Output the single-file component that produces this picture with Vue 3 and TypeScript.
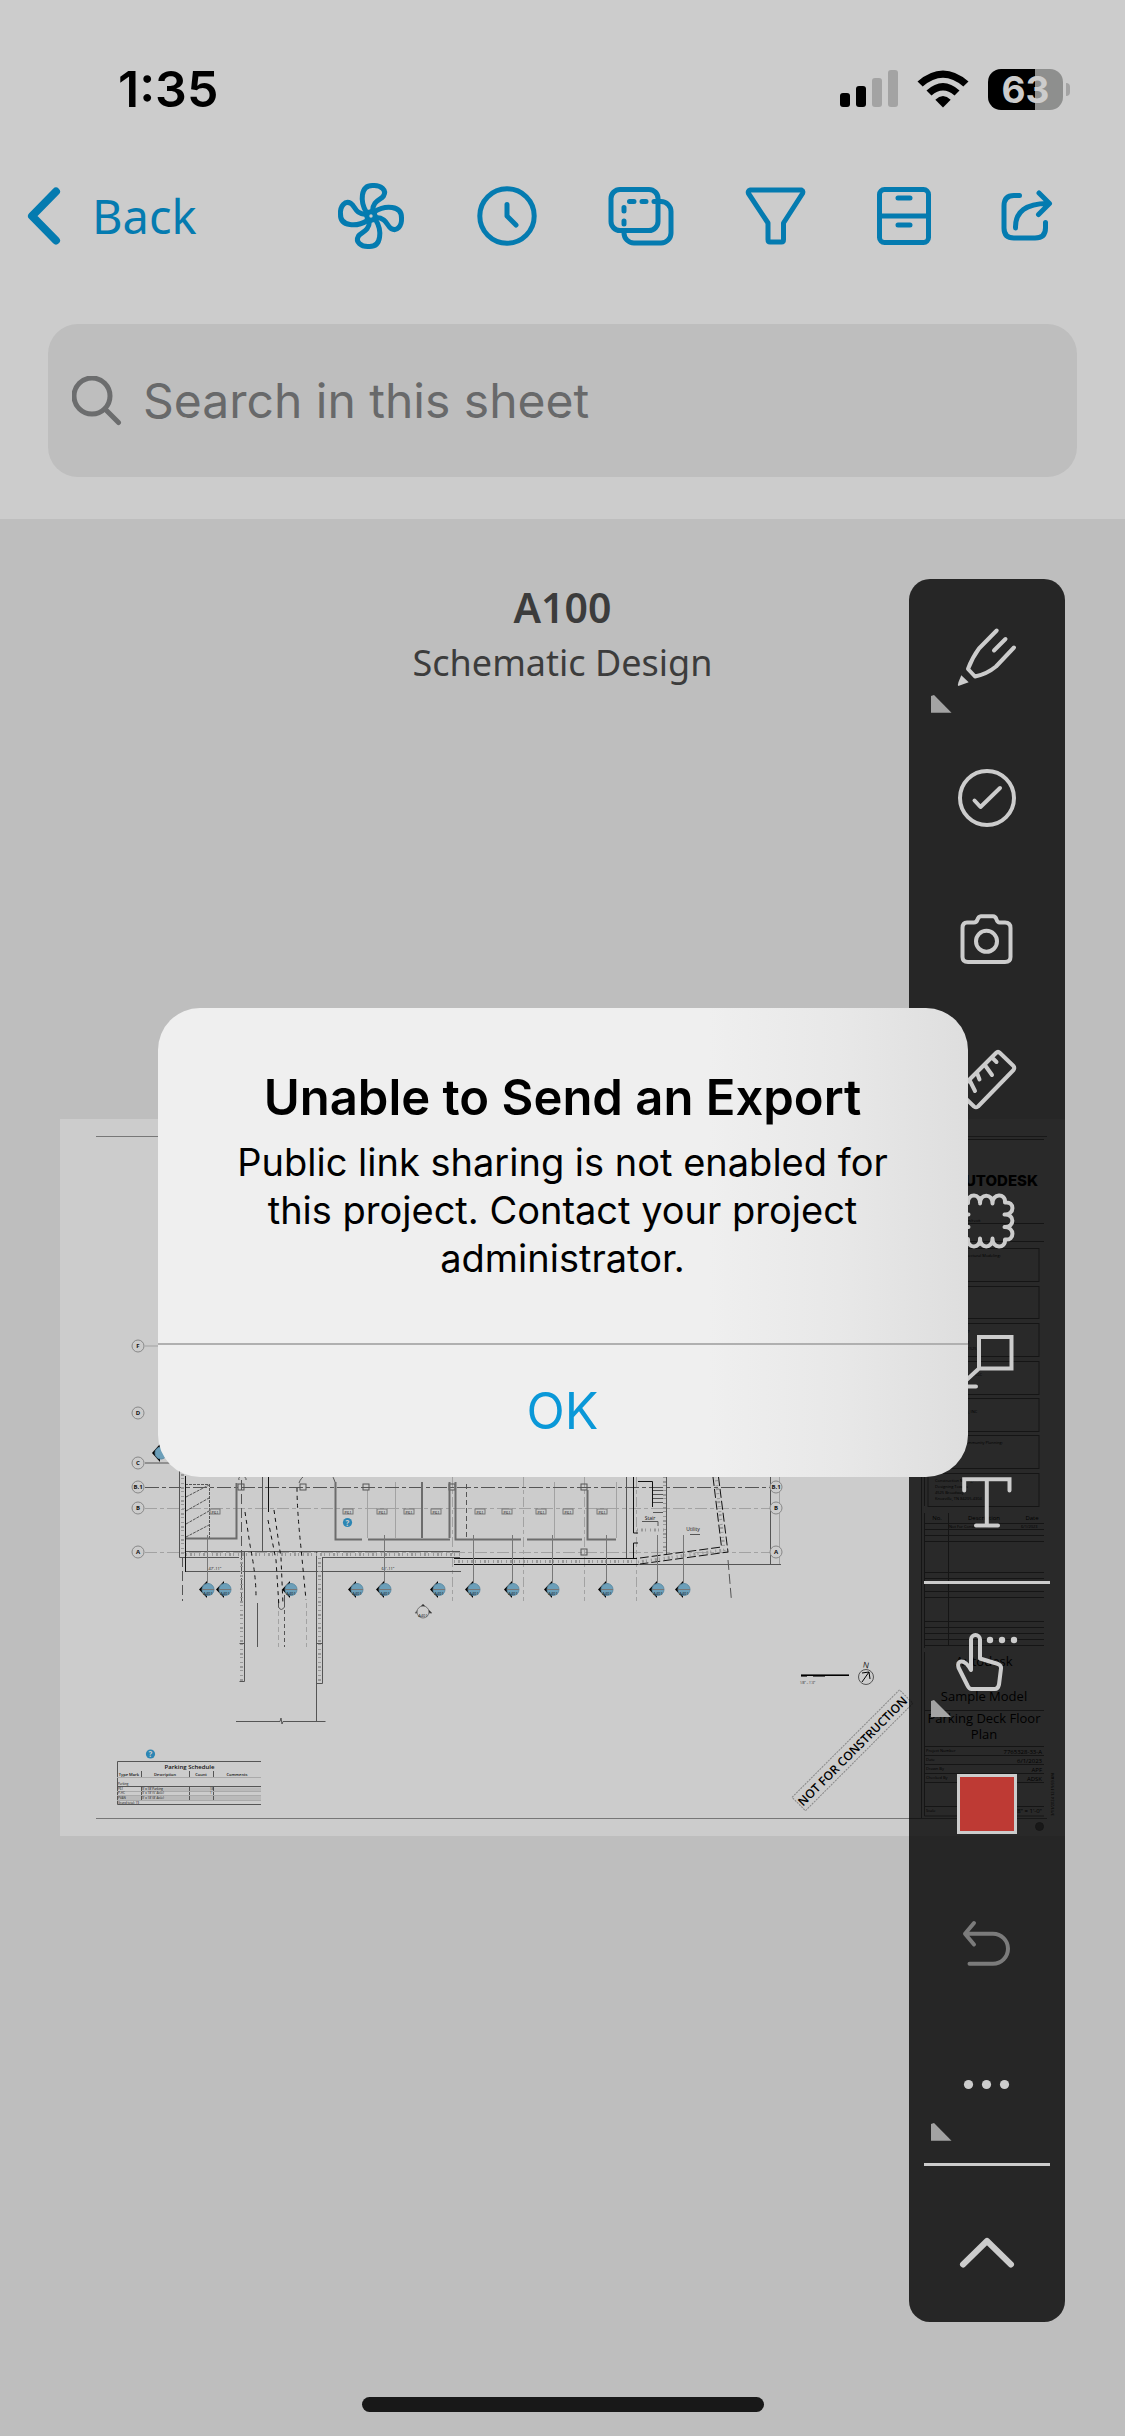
<script setup lang="ts">
import { ref } from 'vue'

interface Marker { x: number; leader: boolean }
interface Bubble { x: number; y: number; label: string }
interface Box { y: number; h: number; lines: string[] }

const query = ref('')
const dialogOpen = ref(true)

const markers: Marker[] = [
  { x: 207, leader: true }, { x: 224, leader: false }, { x: 290, leader: false },
  { x: 356, leader: false }, { x: 384, leader: true }, { x: 438, leader: false },
  { x: 473, leader: true }, { x: 512, leader: true }, { x: 552, leader: true },
  { x: 606, leader: true }, { x: 657, leader: true }, { x: 683, leader: true },
]

const bubbles: Bubble[] = [
  { x: 138, y: 1346, label: 'F' }, { x: 138, y: 1413, label: 'D' },
  { x: 138, y: 1463, label: 'C' }, { x: 138, y: 1487, label: 'B.1' },
  { x: 138, y: 1508, label: 'B' }, { x: 138, y: 1552, label: 'A' },
  { x: 776, y: 1487, label: 'B.1' }, { x: 776, y: 1508, label: 'B' },
  { x: 776, y: 1552, label: 'A' },
]

const stallTags: number[] = [215, 348, 382, 409, 436, 480, 507, 541, 568, 602]
const axes: number[] = [452, 523, 584, 636]
const columns: [number, number][] = [[241, 1487], [303, 1487], [366, 1487], [452, 1487], [584, 1487], [584, 1552]]

const consultants: Box[] = [
  { y: 1248, h: 33, lines: ['Structure & Architectural Modeling:', 'Boston, MA'] },
  { y: 1286, h: 32, lines: ['MEP Design', 'Services, LLC'] },
  { y: 1323, h: 33, lines: ['Systems Modeling:', 'Lawrence, MA', 'Suite 110, Floor 11', 'Phone: (555) 131-1525'] },
  { y: 1361, h: 33, lines: ['Civil Model', 'Engineering Services, LLC', 'Portland'] },
  { y: 1398, h: 33, lines: ['Electrical', 'Building Solutions, INC', 'San Francisco'] },
  { y: 1435, h: 33, lines: ['Architecture & Community Planning:', 'Toronto', 'Partners'] },
  { y: 1473, h: 33, lines: ['Construction Management', 'Designing Towers', '4525 Broadway', 'Knoxville, TN 84205-4304'] },
]

const revisionLines: number[] = [1523, 1529, 1535, 1541, 1572, 1578, 1591, 1597, 1621, 1627, 1633, 1639, 1645]
const facts: [string, string][] = [
  ['Project Number', '7765328-33-A'], ['Date', '6/1/2023'],
  ['Drawn By', 'APF'], ['Checked By', 'ADSK'],
]
</script>

<template>
  <div class="screen">
    <header class="top">
      <div class="status">
        <time class="clock">1:35</time>
        <div class="indicators">
          <svg class="signal" width="58" height="38" viewBox="0 0 58 38" aria-hidden="true">
            <rect x="0" y="23" width="10" height="14" rx="3" />
            <rect x="16" y="16" width="10" height="21" rx="3" />
            <rect class="off" x="32" y="8" width="10" height="29" rx="3" />
            <rect class="off" x="48" y="0" width="10" height="37" rx="3" />
          </svg>
          <svg class="wifi" width="52" height="38" viewBox="0 0 52 38" aria-hidden="true">
            <path d="M26 37.5 L18.3 29.7 Q26 22.5 33.7 29.7Z" />
            <path d="M9.5 20.5 Q26 5.5 42.5 20.500 L37.5 25.5 Q26 15.5 14.5 25.5Z" />
            <path d="M0.5 11.5 Q26 -10.5 51.5 11.5 L46.3 16.5 Q26 -1 5.7 16.5Z" />
          </svg>
          <div class="battery"><span>63</span></div>
        </div>
      </div>

      <nav class="nav">
        <button class="back" type="button">
          <svg width="36" height="60" viewBox="0 0 36 60" aria-hidden="true"><path d="M29 5.5 L5 30 L29 54.5" /></svg>
          <span>Back</span>
        </button>
        <div class="actions">
          <button type="button" aria-label="Issues">
            <svg viewBox="0 0 72 72">
              <circle cx="35" cy="36" r="4.2" />
              <path v-for="a in 4" :key="a" :transform="`rotate(${a * 90} 35 36)`"
                d="M30.5 32.5 C24 22 24 5 37 5.5 C45 5 51 10 47.5 16 C44.5 20.5 37 20 36.5 31" />
            </svg>
          </button>
          <button type="button" aria-label="History">
            <svg viewBox="0 0 72 72"><circle cx="36" cy="36" r="27.2" /><path d="M36 24.5 V36 L45 45" /></svg>
          </button>
          <button type="button" aria-label="Compare">
            <svg viewBox="0 0 72 72">
              <rect x="5" y="9.5" width="47" height="41" rx="9" />
              <path d="M48 21.5 H55 A10 10 0 0 1 65 31.5 V53 A10 10 0 0 1 55 63 H28 A10 10 0 0 1 18 53 V51 M23.5 21.5 H28 M36 21.5 H40 M18 27.5 V31 M18 41 V44" />
            </svg>
          </button>
          <button type="button" aria-label="Filter">
            <svg viewBox="0 0 72 72"><path d="M9 10 H60.5 Q62.5 11 61.5 13.5 L42.5 43 V59.5 Q42.5 62 40.5 62 H29 Q27 62 27 59.5 V43 L7.5 13.5 Q6.5 11 9 10Z" /></svg>
          </button>
          <button class="narrow" type="button" aria-label="Files">
            <svg viewBox="0 0 72 72"><rect x="9.5" y="9.5" width="49" height="53" rx="5" /><path d="M10 36 H58 M28 18 H40 M28 45 H40" /></svg>
          </button>
          <button class="narrow" type="button" aria-label="Share">
            <svg viewBox="0 0 72 72"><path d="M26.5 15.5 H21 Q11 15.5 11 26 V48 Q11 58 21 58 H42 Q52.5 58 52.5 48 V42.5 M22.5 48 C22 32 33 23 56 23.5 M46 13 L56.5 23.5 L45.5 34.5" /></svg>
          </button>
        </div>
      </nav>

      <label class="search">
        <svg width="50" height="50" viewBox="0 0 50 50" aria-hidden="true"><circle cx="20" cy="20" r="18" /><path d="M33 33 L46.5 46.5" /></svg>
        <input v-model="query" type="search" placeholder="Search in this sheet" aria-label="Search in this sheet" />
      </label>
    </header>

    <main class="canvas">
      <h1>A100</h1>
      <p class="sub">Schematic Design</p>

      <svg class="sheet" viewBox="60 1119 1005 717" role="img" aria-label="Parking deck floor plan">
        <g class="frame">
          <path d="M96 1136.5 H1047 M96 1818.5 H1047" />
        </g>

        <g class="pale">
          <path d="M145 1346 H160 M779.5 1477 V1565" />
          <path stroke-dasharray="12 3 4 3" d="M145 1508.5 H770 M145 1552.5 H770" />
          <path d="M367.5 1490 V1538 M422 1482 V1538 M395.5 1482 V1538 M554.5 1482 V1538 M616.5 1482 V1538" />
          <path d="M306.5 1603 V1647 M278.5 1603 V1647" stroke-dasharray="5 3" />
          <path v-for="x in axes" :key="x" :d="`M${x + 0.5} 1477 V1601`" stroke-dasharray="10 3 4 3" />
        </g>
        <g class="thin">
          <path d="M145 1463 H175" />
          <path stroke-dasharray="14 3 4 3" d="M145 1487.5 H770" />
          <path d="M179.5 1470 V1557.5 H239 M322 1557.5 H460 M185 1551.5 H460 M262.5 1477 V1552" />
          <path d="M209.5 1484 V1538 M185 1484.5 H209 M186 1497 L209 1485 M186 1511 L209 1498 M186 1524 L209 1511 M186 1537 L209 1525" stroke-dasharray="3 1" />
          <path d="M185 1571.5 H461 M239.5 1681.5 H244.5 V1552 M239.5 1643.5 H244 M316.5 1552 V1721 M322.5 1557 V1683.5 H316.5 M316.5 1643.5 H322.5" />
          <path d="M236 1721.5 H280 L281 1718 L282 1724 L283 1721.5 H325.5 M257.5 1603 V1647" />
          <path d="M284.5 1603 V1647" stroke-dasharray="4 3" />
          <path stroke-dasharray="10 4" d="M182.5 1557 V1601 M241.5 1480 V1601 M728 1560 L731.5 1601" />
          <path d="M454 1564.5 H781 M770.5 1477 V1565 M626.5 1477 V1559 M666.5 1477 V1555" />
          <path d="M653 1490.5 H663 M653 1494.5 H663 M653 1498.5 H663 M653 1502.5 H663 M653 1512.5 H663 M642 1521.5 H658 V1526" />
          <path d="M239 1480 C237 1475 247 1475 246 1480 M299 1483 C302 1475 307 1475 313 1470 M335 1482 Q334 1477 330 1474" />
          <path d="M466.5 1484 V1538" stroke-dasharray="5 3" />
          <rect v-for="(c, i) in columns" :key="i" :x="c[0] - 3" :y="c[1] - 3" width="6" height="6" />
          <path d="M690 1534.5 H700 M278.5 1600 V1607 Q281 1612 284.5 1607 V1595" />
        </g>
        <g class="speckle">
          <path d="M182.5 1470 V1556 M186 1554.5 H460 M241.5 1558 V1681 M319.5 1558 V1682 M454 1561.5 H634 M638 1562 L724 1550 L716 1477 M664.5 1477 V1552 M637 1530 H664" />
        </g>
        <g class="thick">
          <path d="M335.5 1482 V1539.5 H362 M368 1539.5 H450 M422 1482 V1538 M449.5 1482 V1538 M455.5 1482 V1539.5 H521 M527 1539.5 H582 M587.5 1490 V1539.5 H616 M236.5 1483 V1538.5 H185" />
        </g>
        <g class="dark">
          <path d="M185.5 1476 V1572 M268.5 1477 V1512 M633.5 1477 V1533 H638 M633.5 1558 V1543 H638 M638 1481.5 H652.5 V1507 M454 1558.5 H637 M454 1564.5 H638" />
          <path stroke-dasharray="9 3" d="M713 1477 L721.5 1547 L640 1558 M718.5 1477 L728 1552 L640 1564" />
          <path stroke-dasharray="4 4" d="M245 1512 L250 1545 Q256 1575 256 1596 M268 1520 L276 1560 L279 1607 M274 1510 L281 1558 L283 1605 M297 1488 Q297 1510 301 1548 L306 1600" />
        </g>

        <g class="tags">
          <template v-for="x in stallTags" :key="x">
            <rect :x="x - 5" y="1509" width="10" height="5" />
            <text :x="x" y="1514">P61</text>
          </template>
          <text x="650" y="1520" class="room">Stair</text>
          <text x="693" y="1531" class="room">Utility</text>
          <text x="215" y="1570">47'-11"</text>
          <text x="388" y="1570">61'-11"</text>
        </g>

        <g v-for="m in markers" :key="m.x" class="marker">
          <path v-if="m.leader" class="leader" :d="`M${m.x + 0.5} 1535 V1583`" />
          <path :d="`M${m.x - 8} 1589.5 L${m.x} 1581 V1598Z`" />
          <circle :cx="m.x + 1" cy="1589.5" r="6" />
          <path class="leader" :d="`M${m.x - 5} 1589.5 H${m.x + 7}`" />
          <text :x="m.x + 1" y="1595">A401</text>
        </g>
        <g class="marker"><path d="M152 1453 L160 1444 V1462Z" /><circle cx="161" cy="1453" r="6" /></g>

        <g class="detail">
          <path class="solid" d="M415 1613 L423 1604 L432 1613Z" />
          <circle cx="423" cy="1612" r="6" />
          <text x="423" y="1617">A401</text>
        </g>

        <g v-for="(b, i) in bubbles" :key="i" class="bubble">
          <circle :cx="b.x" :cy="b.y" r="6" />
          <text :x="b.x" :y="b.y + 2">{{ b.label }}</text>
        </g>

        <g class="pin">
          <circle cx="347.5" cy="1522.5" r="4.6" /><text x="347.5" y="1525.5">?</text>
          <circle cx="150.5" cy="1754" r="4.6" /><text x="150.5" y="1757">?</text>
        </g>

        <g class="schedule">
          <path class="shade" d="M141 1789.5 H261 M117 1798 H261" />
          <path d="M261 1761.5 H117.5 V1804.5 H261 M117 1786.5 H261 M141.5 1771 V1777 M189.5 1771 V1777 M213.5 1771 V1777 M141.5 1787 V1800 M189.5 1787 V1800 M213.5 1787 V1800" />
          <path class="faint" d="M117 1777.5 H261 M117 1791.5 H261 M117 1795.5 H261 M117 1800.5 H261" />
          <text class="name" x="189.5" y="1769">Parking Schedule</text>
          <g class="head"><text x="129" y="1776">Type Mark</text><text x="165" y="1776">Description</text><text x="201" y="1776">Count</text><text x="237" y="1776">Comments</text></g>
          <g class="cells">
            <text x="118" y="1785">Parking</text>
            <text x="118" y="1790">P61</text><text x="142" y="1790">9' x 18' Parking</text><text x="210" y="1790">18</text>
            <text x="118" y="1794">P-HC</text><text x="142" y="1794">9' x 18' (5' Aisle)</text><text x="210" y="1794">1</text>
            <text x="118" y="1799">PVAN</text><text x="142" y="1799">9' x 18' (8' Aisle)</text>
            <text x="118" y="1804">Grand total: 19</text>
          </g>
        </g>

        <g class="scale">
          <path d="M801 1674.5 H849 M801 1676.5 H807 M813 1676.5 H825" />
          <path class="bar" d="M801 1675.5 H849" />
          <text x="800" y="1684">1/8" = 1'-0"</text>
          <circle cx="866" cy="1677" r="7.5" />
          <path class="bar" d="M862 1682 L869 1672 M862 1673 L869 1672 L870 1679" />
          <text class="north" x="866" y="1668" transform="rotate(12 866 1665)">N</text>
        </g>

        <g transform="rotate(-45 852.5 1751)" class="stamp">
          <rect x="777" y="1741" width="152" height="19" />
          <text x="852.5" y="1755.5">NOT FOR CONSTRUCTION</text>
        </g>

        <g class="block">
          <path d="M921.5 1137 V1818 M924.5 1139.5 H1044 M924.5 1139 V1506 M924.5 1513 V1648 M924.5 1652 V1816 H1044 M924 1223.5 H1044 M924 1241.5 H1044 M948.5 1513 V1646" />
          <path v-for="y in revisionLines" :key="y" :d="`M924 ${y + 0.5} H1044`" />
          <path d="M924 1710.5 H1044 M924 1746.5 H1044 M924 1755.5 H1044 M924 1764.5 H1044 M924 1773.5 H1044 M924 1782.5 H1044 M924 1806.5 H1044" />
          <text class="brand" x="1038" y="1186">AUTODESK</text>
          <text class="small" x="934" y="1222">www.autodesk.com/revit</text>
          <g v-for="b in consultants" :key="b.y">
            <rect x="928" :y="b.y + 0.5" width="111" :height="b.h" />
            <text v-for="(l, i) in b.lines" :key="i" class="small" x="935" :y="b.y + 9 + i * 6">{{ l }}</text>
          </g>
          <g class="cols"><text x="937" y="1520">No.</text><text x="984" y="1520">Description</text><text x="1032" y="1520">Date</text></g>
          <text class="small" x="949" y="1528">Not For Construction</text>
          <text class="small" x="1021" y="1528">6/1/2023</text>
          <g class="big">
            <text x="984" y="1666">Autodesk</text>
            <text x="984" y="1701">Sample Model</text>
            <text x="984" y="1723">Parking Deck Floor</text>
            <text x="984" y="1739">Plan</text>
          </g>
          <template v-for="(f, i) in facts" :key="f[0]">
            <text class="small" x="926" :y="1752 + i * 9">{{ f[0] }}</text>
            <text class="value" x="1042" :y="1754 + i * 9">{{ f[1] }}</text>
          </template>
          <text class="small" x="926" y="1812">Scale</text>
          <text class="value" x="1042" y="1813">1/8" = 1'-0"</text>
          <text class="small" transform="translate(1054 1816) rotate(-90)">3/11/2024 12:19:59 AM</text>
          <circle cx="1039.5" cy="1826.5" r="4" />
        </g>
      </svg>

      <aside class="tools" aria-label="Markup tools">
        <button type="button" aria-label="Draw">
          <svg viewBox="0 0 156 141">
            <path d="M87.7 43.5 L70 61.5 Q63 71 59 82 L66 89.5 Q78 87 87 79.5 L105 60.5 M96.5 52 L85 63.5" />
            <path class="fill" d="M52.3 88.3 L59.7 95.3 L49.3 99 Q48.5 98 49.5 95Z" />
            <path class="corner" d="M22 109 L25 108 L42.5 125.7 H22Z" />
          </svg>
        </button>
        <button type="button" aria-label="Issue">
          <svg viewBox="0 0 156 141"><circle cx="78" cy="70" r="27" /><path d="M65.5 72.5 L71.5 79 L91 60" /></svg>
        </button>
        <button type="button" aria-label="Photo">
          <svg viewBox="0 0 156 141">
            <path d="M58 53.5 H65 Q67.5 53.5 68.5 50.5 T72 47.3 H84 Q86.5 47.3 87.5 50.5 T91 53.5 H96 Q101.5 53.5 101.5 59 V88 Q101.5 93 96 93 H59 Q53.5 93 53.5 88 V59 Q53.5 53.5 58 53.5Z" />
            <circle cx="77.5" cy="72.3" r="10.5" />
          </svg>
        </button>
        <button type="button" aria-label="Measure">
          <svg viewBox="0 0 156 141">
            <path d="M87 43 L51 79 Q49.5 81 51 83 L65 96.5 Q67 98 69 96.5 L104.5 60 Q106 58 104.5 56 L91 43 Q89 41 87 43Z M83 47.5 L87.5 52 M75.5 54.5 L83 65 M68 63 L70.5 69.5 M60.5 70 L66 81" />
          </svg>
        </button>
        <button type="button" aria-label="Cloud">
          <svg viewBox="0 0 156 141">
            <path d="M59 52 C58 42 72 42 71 52.5 C70.5 42 84 42 83.5 52.5 C83 42 97 42 96 51.5 C106 50 106 64 95.5 63.5 C106 63 106 76.5 95.5 76 C106 76 106 90 96 88.5 C97 98 83 98 83.5 87.5 C84 98 70.5 98 71 87.5 C72 98 58 98 59 88 C49 90 49 76 59.5 76 C49 76.5 49 63 59.5 63.5 C49 64 49 50 59 52Z" />
          </svg>
        </button>
        <button type="button" aria-label="Callout">
          <svg class="square" viewBox="0 0 156 141"><path d="M70 45 H102.5 V76.5 H70Z M70 76.5 L52 93 M67 94.5 H51 V79" /></svg>
        </button>
        <button type="button" aria-label="Text">
          <svg class="square" viewBox="0 0 156 141"><path d="M55.2 57.5 V46.3 H100.5 V57.5 M77.8 46.3 V92.5 M67 92.5 H89" /></svg>
        </button>
        <hr />
        <button type="button" aria-label="Select">
          <svg viewBox="0 0 156 141">
            <path d="M62 78 V47.5 A4.5 4.5 0 0 1 71 47.5 V66.5 L89 72 Q92.5 73.5 92 76.5 L90 92.5 Q89 97 86 97 H62.5 Q60 97 58.5 93.5 L49.5 75.5 Q48 70 52 69.5 Q57 69 62 78Z" />
            <g class="fill"><circle cx="81" cy="48" r="3.2" /><circle cx="93" cy="48" r="3.2" /><circle cx="105" cy="48" r="3.2" /></g>
            <path class="corner" d="M22 109 L25 108 L42 125 H22Z" />
          </svg>
        </button>
        <button type="button" aria-label="Colour"><span class="swatch"></span></button>
        <button class="disabled" type="button" disabled aria-label="Undo">
          <svg viewBox="0 0 156 141"><path d="M65 49 L56 59.7 L65 70.5 M56 59.7 H84 A15 15 0 0 1 84 89.7 H60.5" /></svg>
        </button>
        <button type="button" aria-label="More">
          <svg viewBox="0 0 156 141">
            <g class="fill"><circle cx="59.5" cy="69.5" r="4.6" /><circle cx="77.5" cy="69.5" r="4.6" /><circle cx="95.5" cy="69.5" r="4.6" /></g>
            <path class="corner" d="M22 109 L25 108 L42.5 125.7 H22Z" />
          </svg>
        </button>
        <hr />
        <button type="button" aria-label="Collapse">
          <svg viewBox="0 0 156 141"><path class="heavy" d="M54 90.5 L78 67 L102 90.5" /></svg>
        </button>
      </aside>
    </main>

    <div v-if="dialogOpen" class="backdrop">
      <section class="dialog" role="alertdialog" aria-labelledby="alert-title" aria-describedby="alert-text">
        <div class="message">
          <h2 id="alert-title">Unable to Send an Export</h2>
          <p id="alert-text">Public link sharing is not enabled for this project. Contact your project administrator.</p>
        </div>
        <button class="ok" type="button" @click="dialogOpen = false">OK</button>
      </section>
    </div>
    <div class="home"></div>
  </div>
</template>

<style>
body { margin: 0; background: #bebebe; }
</style>

<style scoped>
* { box-sizing: border-box; }
button { padding: 0; border: 0; background: none; font: inherit; color: inherit; }
.screen {
  position: relative;
  display: flex;
  flex-direction: column;
  min-height: 100vh;
  overflow: hidden;
  background: #bebebe;
  font-family: Inter, "Liberation Sans", sans-serif;
}
.top { padding-bottom: 42px; background: #ccc; }

.status {
  display: flex;
  align-items: center;
  justify-content: space-between;
  height: 144px;
  padding: 34px 55px 0 118px;
}
.clock { font-size: 50px; font-weight: 600; line-height: 60px; color: #000; }
.indicators { display: flex; align-items: center; gap: 19px; }
.signal .off { fill: #a3a3a3; }
.battery {
  position: relative;
  display: flex;
  align-items: center;
  justify-content: center;
  width: 75px;
  height: 41px;
  margin-right: 7px;
  border-radius: 13px;
  background: linear-gradient(90deg, #000 63%, #8e8f8e 63%);
  color: #ccc;
  font-size: 37px;
  font-weight: 700;
  line-height: 41px;
}
.battery::after {
  content: "";
  position: absolute;
  right: -7px;
  top: 14px;
  width: 4px;
  height: 13px;
  border-radius: 0 4px 4px 0;
  background: #a3a3a3;
}

.nav {
  display: flex;
  align-items: center;
  justify-content: space-between;
  height: 144px;
  padding: 0 35px 0 27px;
  color: #047bb0;
}
.nav svg {
  fill: none;
  stroke: currentColor;
  stroke-width: 5px;
  stroke-linecap: round;
  stroke-linejoin: round;
}
.back {
  display: flex;
  align-items: center;
  gap: 29px;
  font-family: "Noto Sans", "Open Sans", sans-serif;
  font-size: 47px;
  line-height: 60px;
}
.nav .back svg { stroke-width: 8px; }
.actions { display: flex; }
.actions button { display: flex; justify-content: center; width: 135px; }
.actions .narrow { width: 123px; }
.actions svg { width: 72px; height: 72px; }

.search {
  display: flex;
  align-items: center;
  gap: 21px;
  height: 153px;
  margin: 36px 48px 0;
  padding: 0 24px;
  border-radius: 30px;
  background: #bebebe;
}
.search svg { flex: none; fill: none; stroke: #6c6d6e; stroke-width: 5px; stroke-linecap: round; }
.search input {
  flex: 1;
  min-width: 0;
  padding: 0;
  border: 0;
  outline: 0;
  background: none;
  font: 400 48px/60px Inter, "Liberation Sans", sans-serif;
  color: #222;
}
.search input::placeholder { color: #68696a; opacity: 1; }

.canvas {
  position: relative;
  flex: 1;
  padding: 61px 60px 120px;
  font-family: "Noto Sans", "Open Sans", sans-serif;
  text-align: center;
  color: #3c3c3c;
}
h1 { margin: 0; font-size: 41px; font-weight: 600; line-height: 54px; }
.sub { margin: 2px 0 429px; font-size: 36px; line-height: 54px; }

.sheet { display: block; width: 100%; background: #ccc; }
.sheet g { fill: none; }
.sheet text { stroke: none; fill: #111; font-family: "Open Sans", "Noto Sans", sans-serif; }
.frame { stroke: #777; stroke-width: 1px; }
.pale { stroke: #a2a2a2; stroke-width: 1px; }
.thin { stroke: #555; stroke-width: 1px; }
.thick { stroke: #6c6c6c; stroke-width: 2px; }
.dark { stroke: #111; stroke-width: 1px; }
.speckle { stroke: #999; stroke-width: 3px; stroke-dasharray: 1 3 2 2 1 4; }
.tags { stroke: #777; stroke-width: 1px; text-anchor: middle; }
.tags text { font-size: 4px; }
.tags .room { font-size: 5px; }
.marker path { fill: #000; }
.marker .leader { stroke: #777; stroke-width: 1px; }
.marker circle { fill: #6c9fb9; stroke: #5d8ca5; stroke-width: 1px; }
.marker text { font-size: 4px; text-anchor: middle; }
.detail { stroke: #777; stroke-width: 1px; text-anchor: middle; }
.detail .solid { fill: #000; }
.detail circle { fill: #ccc; }
.detail text { font-size: 4px; }
.bubble { stroke: #888; stroke-width: 1px; text-anchor: middle; }
.bubble circle { fill: #ccc; }
.bubble text { font-size: 6px; font-weight: 700; }
.pin circle { fill: #2c86b4; }
.sheet .pin text { font-size: 8px; font-weight: 700; text-anchor: middle; fill: #ccc; }
.schedule { stroke: #555; stroke-width: 1px; }
.schedule .shade { stroke: #bababa; stroke-width: 4px; }
.schedule .faint { stroke: #aaa; }
.schedule .name { font-size: 6px; font-weight: 600; text-anchor: middle; }
.head { text-anchor: middle; }
.head text { font-size: 4px; font-weight: 600; }
.cells text { font-size: 3px; }
.scale { stroke: #555; stroke-width: 1px; }
.scale .bar { stroke: #000; }
.scale text { font-size: 3px; }
.scale .north { font-size: 8px; text-anchor: middle; }
.stamp { stroke: #888; stroke-width: 1px; text-anchor: middle; }
.stamp rect { stroke-dasharray: 2 1; }
.sheet .stamp text { font-size: 12px; font-weight: 600; fill: #000; }
.block { stroke: #6a6a6a; stroke-width: 1px; }
.sheet .block text { fill: #000; }
.sheet .brand { font-family: Inter, sans-serif; font-size: 15px; font-weight: 800; text-anchor: end; }
.small { font-size: 4px; }
.value { font-size: 6px; text-anchor: end; }
.cols { text-anchor: middle; }
.cols text { font-size: 6px; }
.big { text-anchor: middle; }
.big text { font-size: 13px; }
.block circle { fill: #777; }

.tools {
  position: absolute;
  top: 60px;
  right: 60px;
  display: flex;
  flex-direction: column;
  width: 156px;
  padding: 8px 0 7px;
  border-radius: 21px;
  background: rgba(0, 0, 0, 0.8);
  color: #ccc;
}
.tools button { display: flex; align-items: center; justify-content: center; height: 141px; }
.tools svg {
  width: 156px;
  height: 141px;
  fill: none;
  stroke: currentColor;
  stroke-width: 4px;
  stroke-linecap: round;
  stroke-linejoin: round;
}
.tools .square { stroke-linejoin: miter; }
.tools .fill { fill: currentColor; stroke: none; }
.tools .corner { fill: #a3a3a3; stroke: none; }
.tools .heavy { stroke-width: 6px; }
.tools .disabled { color: #7b7b7b; }
.tools hr { width: 126px; height: 3px; margin: 7px auto 8px; border: 0; background: #ccc; }
.swatch { width: 60px; height: 60px; border: 3px solid #ccc; background: #be3a34; }

.backdrop {
  position: absolute;
  inset: 0;
  display: flex;
  align-items: center;
  justify-content: center;
  padding-top: 48px;
}
.dialog {
  width: 72%;
  overflow: hidden;
  border-radius: 42px;
  background: linear-gradient(90deg, #efefef 68%, #e8e8e8 84%, #dedede 100%);
  color: #000;
  text-align: center;
}
.message { padding: 58px 66px 61px; border-bottom: 2px solid #b0b0b0; }
h2 { margin: 0; font-size: 49px; font-weight: 600; line-height: 63px; white-space: nowrap; }
.message p { margin: 9px 0 0; font-size: 38px; line-height: 48px; }
.ok { display: block; width: 100%; height: 132px; font-size: 50px; line-height: 60px; color: #0a98d8; }

.home {
  position: absolute;
  left: 50%;
  bottom: 24px;
  width: 402px;
  height: 15px;
  margin-left: -201px;
  border-radius: 8px;
  background: #181818;
}
</style>
